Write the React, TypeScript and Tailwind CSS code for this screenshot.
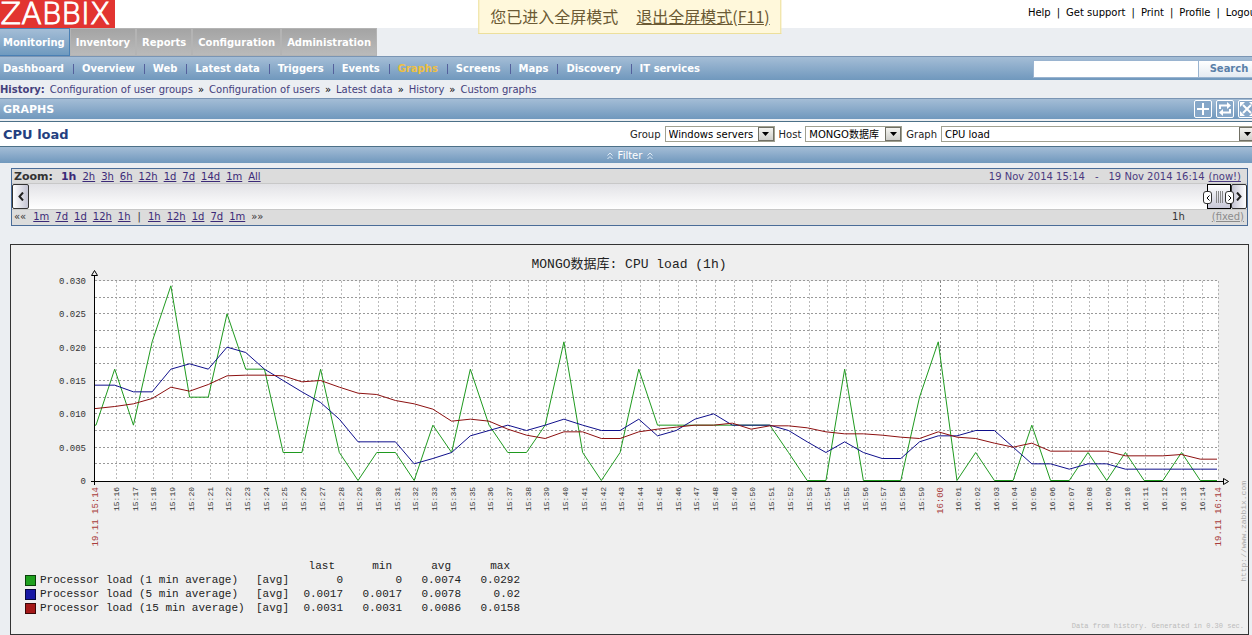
import { useState } from 'react';
import type { ReactNode } from 'react';

const MAIN_MENU = ['Monitoring', 'Inventory', 'Reports', 'Configuration', 'Administration'];
const SUB_MENU = [
  'Dashboard', 'Overview', 'Web', 'Latest data', 'Triggers', 'Events',
  'Graphs', 'Screens', 'Maps', 'Discovery', 'IT services'
];
const TOP_LINKS = ['Help', 'Get support', 'Print', 'Profile', 'Logout'];
const HISTORY = [
  'Configuration of user groups', 'Configuration of users', 'Latest data', 'History', 'Custom graphs'
];
const ZOOM_LEVELS = ['2h', '3h', '6h', '12h', '1d', '7d', '14d', '1m', 'All'];
const BACK_STEPS = ['1m', '7d', '1d', '12h', '1h'];
const FORWARD_STEPS = ['1h', '12h', '1d', '7d', '1m'];

// one value per minute from 15:15 on, in 1/10000 of load
const SERIES = [
  {
    name: 'Processor load (1 min average)',
    color: '#1f9a1f',
    swatch: 'bg-[#1fa01f] border-[#0a400a]',
    stats: ['0', '0', '0.0074', '0.0292'],
    data: [
      83, 167, 83, 208, 292, 125, 125, 250, 167, 167, 42, 42, 167, 42, 0, 42, 42, 0, 83, 42,
      167, 83, 42, 42, 83, 208, 42, 0, 42, 167, 83, 83, 83, 83, 83, 83, 83, 42, 0, 0,
      167, 0, 0, 0, 125, 208, 0, 42, 0, 0, 83, 0, 0, 42, 0, 42, 0, 0, 42, 0
    ]
  },
  {
    name: 'Processor load (5 min average)',
    color: '#10108c',
    swatch: 'bg-[#1818a4] border-[#08083c]',
    stats: ['0.0017', '0.0017', '0.0078', '0.02'],
    data: [
      143, 143, 133, 133, 167, 175, 167, 200, 192, 167, 150, 133, 117, 92, 58, 58, 58, 25, 33, 42,
      67, 75, 83, 75, 83, 92, 83, 75, 75, 92, 67, 75, 92, 100, 83, 83, 83, 75, 58, 42,
      58, 42, 33, 33, 58, 67, 67, 75, 75, 50, 25, 25, 17, 25, 25, 17, 17, 17, 17, 17
    ]
  },
  {
    name: 'Processor load (15 min average)',
    color: '#8c1010',
    swatch: 'bg-[#a41818] border-[#3c0808]',
    stats: ['0.0031', '0.0031', '0.0086', '0.0158'],
    data: [
      108, 111, 115, 123, 140, 134, 144, 157, 158, 158, 157, 148, 150, 140, 131, 129, 120, 115, 107, 89,
      92, 89, 77, 68, 63, 73, 73, 63, 63, 73, 77, 80, 83, 83, 86, 77, 82, 82, 79, 73,
      70, 70, 68, 65, 63, 73, 65, 63, 56, 50, 56, 44, 44, 44, 44, 37, 37, 37, 39, 32
    ]
  }
];

const PLOT = { left: 84, right: 1207, top: 36, bottom: 236 };
const MINUTE = (PLOT.right - PLOT.left) / 60;

const gridX = (i: number) => Math.round(105 + i * MINUTE) + 0.5;
const gridY = (i: number) => Math.round(PLOT.bottom - (i * (PLOT.bottom - PLOT.top)) / 12) - 0.5;

function toPoints(data: number[]) {
  const y = (v: number) => PLOT.bottom - 0.5 - (v / 300) * (PLOT.bottom - PLOT.top);
  const points = data.map((v, i) => `${PLOT.left + 1 + i * MINUTE},${y(v)}`);
  return [`${PLOT.left},${y(data[0])}`, ...points, `${PLOT.right - 1},${y(data[data.length - 1])}`].join(' ');
}

function timeLabel(i: number) {
  const minutes = 16 + i;
  return `${15 + Math.floor(minutes / 60)}:${String(minutes % 60).padStart(2, '0')}`;
}

function VerticalLabel({ x, y = 242, children, className }: { x: number; y?: number; children: ReactNode; className: string }) {
  return (
    <text transform={`translate(${x} ${y}) rotate(-90)`} textAnchor="end" className={className}>
      {children}
    </text>
  );
}

function Chart() {
  const minutes = Array.from({ length: 59 }, (_, i) => i);
  const steps = Array.from({ length: 12 }, (_, i) => i + 1);

  return (
    <svg viewBox="0 0 1237 305" className="block w-full overflow-visible font-['Liberation_Mono','Noto_Sans_CJK_SC',monospace]">
      <text x="618" y="23" textAnchor="middle" className="fill-[#222] text-[13px]">MONGO数据库: CPU load (1h)</text>

      <rect x={PLOT.left} y={PLOT.top} width={PLOT.right - PLOT.left} height={PLOT.bottom - PLOT.top} fill="#fff" />

      {/* Grid */}
      <g strokeDasharray="2 2" strokeWidth="1" fill="none">
        {minutes.map(i => (
          <line key={i} x1={gridX(i)} x2={gridX(i)} y1={PLOT.top} y2={PLOT.bottom} stroke={i === 44 ? '#888' : '#bbb'} />
        ))}
        {steps.map(i => (
          <line key={i} x1={PLOT.left} x2={PLOT.right} y1={gridY(i)} y2={gridY(i)} stroke="#999" />
        ))}
        <line x1={PLOT.right + 0.5} x2={PLOT.right + 0.5} y1={PLOT.top} y2={PLOT.bottom} stroke="#b4b4b4" />
      </g>

      {SERIES.map(s => (
        <polyline key={s.name} points={toPoints(s.data)} fill="none" stroke={s.color} strokeWidth="1" />
      ))}

      {/* Axes */}
      <g stroke="#000" fill="none">
        <path d="M83.5 30V240M80 236.5H1213" />
        <path d="M80.5 30.5L83.5 25.5L86.5 30.5Z" fill="#efefef" />
        <path d="M1212.5 233.5L1217.5 236.5L1212.5 239.5Z" fill="#efefef" />
      </g>

      {[0, 1, 2, 3, 4, 5, 6].map(i => (
        <text key={i} x="75" y={gridY(i * 2) + 3} textAnchor="end" className="fill-[#333] text-[9px]">
          {i === 0 ? '0' : (i * 0.005).toFixed(3)}
        </text>
      ))}

      <VerticalLabel x={87} className="fill-[#a83c3c] text-[9px]">19.11 15:14</VerticalLabel>
      {minutes.map(i => (
        <VerticalLabel key={i} x={gridX(i) + 2} className={i === 44 ? 'fill-[#a83c3c] text-[9px]' : 'fill-[#333] text-[8px]'}>
          {timeLabel(i)}
        </VerticalLabel>
      ))}
      <VerticalLabel x={1210} className="fill-[#a83c3c] text-[9px]">19.11 16:14</VerticalLabel>
      <VerticalLabel x={1235} y={236} className="fill-[#aaa] text-[8px]">http://www.zabbix.com</VerticalLabel>
    </svg>
  );
}

function Legend() {
  return (
    <table className="ml-3.5 mt-[9px] border-collapse font-['Liberation_Mono',monospace] text-[11px] leading-[14px] text-[#222]">
      <thead>
        <tr>
          <td className="w-[231px]" />
          <td />
          {['last', 'min', 'avg', 'max'].map((h, i) => (
            <th key={h} scope="col" className={i === 0 ? 'w-[54px] pr-2 text-right font-normal' : 'w-[59px] pr-2.5 text-right font-normal'}>
              {h}
            </th>
          ))}
        </tr>
      </thead>
      <tbody>
        {SERIES.map(s => (
          <tr key={s.name}>
            <th scope="row" className="text-left font-normal">
              <span className="flex items-center gap-1">
                <span className={`size-[11px] border ${s.swatch}`} />
                {s.name}
              </span>
            </th>
            <td>[avg]</td>
            {s.stats.map((v, i) => <td key={i} className="text-right">{v}</td>)}
          </tr>
        ))}
      </tbody>
    </table>
  );
}

function Dropdown({ id, label, options, className }: { id: string; label: string; options: string[]; className: string }) {
  return (
    <>
      <label htmlFor={id} className="mr-1 pt-px">{label}</label>
      <div className={`relative mr-1 h-4 border border-[#a0a090] bg-white ${className}`}>
        <select id={id} className="block h-full w-full appearance-none pt-px pl-[3px] pr-4 text-[10px] text-black outline-none">
          {options.map(o => <option key={o}>{o}</option>)}
        </select>
        <span className="pointer-events-none absolute inset-y-0 right-0 flex w-4 items-center justify-center border border-[#706f64] bg-linear-to-b from-[#f4f4f0] to-[#cfcfcb]">
          <svg viewBox="0 0 7 4" className="h-1 w-[7px]"><path d="M0 0H7L3.5 4Z" fill="#000" /></svg>
        </span>
      </div>
    </>
  );
}

function IconButton({ label, children }: { label: string; children: ReactNode }) {
  return (
    <button type="button" aria-label={label} className="size-[18px] rounded-[2px] border border-white bg-[#86a7c8]">
      <svg viewBox="0 0 16 16" className="size-4" fill="none" stroke="#fff" strokeWidth="2">{children}</svg>
    </button>
  );
}

function FilterArrow() {
  return (
    <svg viewBox="0 0 6 8" className="h-2 w-1.5" fill="none" stroke="#dfeaf4">
      <path d="M0.5 3.5L3 1L5.5 3.5M0.5 7L3 4.5L5.5 7" />
    </svg>
  );
}

function Grip({ direction, className }: { direction: 'left' | 'right'; className: string }) {
  return (
    <span className={`absolute top-[6px] flex h-[13px] w-[9px] items-center justify-center rounded-[3px] border border-[#333] bg-white ${className}`}>
      <svg viewBox="0 0 4 6" className="h-1.5 w-1" fill="none" stroke="#000">
        <path d={direction === 'left' ? 'M3.5 0.5L1 3L3.5 5.5' : 'M0.5 0.5L3 3L0.5 5.5'} />
      </svg>
    </span>
  );
}

function StepLinks({ items }: { items: string[] }) {
  return (
    <>
      {items.map(item => <a key={item} href="#" className="text-[#3b2a78] underline">{item}</a>)}
    </>
  );
}

function Timeline() {
  return (
    <div className="ml-[11px] mr-3 mt-[5px] border border-[#4a6c98] bg-[#dcdcdc] text-[#333]">
      <div className="flex h-3.5 items-center justify-between pt-0.5 pl-0.5 pr-[6px]">
        <div className="flex items-center gap-1.5">
          <span className="text-[11px] font-bold">Zoom:</span>
          <a href="#" className="pl-0.5 text-[11px] font-bold text-[#3b2a78]">1h</a>
          <StepLinks items={ZOOM_LEVELS} />
        </div>
        <div className="flex items-center text-[#4a3a80]">
          <a href="#">19 Nov 2014 15:14</a>
          <span className="px-2.5">-</span>
          <a href="#">19 Nov 2014 16:14</a>
          <a href="#" className="ml-1 underline">(now!)</a>
        </div>
      </div>

      <div className="flex h-[27px] items-stretch border-y border-[#c8c8c8] bg-linear-to-b from-[#e2e2e6] to-white">
        <button type="button" aria-label="Back" className="flex w-[17px] items-center justify-center rounded-[2px] border border-[#333] bg-linear-to-r from-white to-[#c4c4d4]">
          <svg viewBox="0 0 6 9" className="h-[9px] w-1.5" fill="none" stroke="#222" strokeWidth="2"><path d="M5 0.5L1.5 4.5L5 8.5" /></svg>
        </button>
        <div className="flex-1" />
        <div className="relative flex w-6 items-center justify-center gap-px border border-black bg-linear-to-b from-white to-[#c8c8d8]">
          <Grip direction="left" className="-left-[5px]" />
          {[0, 1, 2, 3].map(i => <span key={i} className="h-3 w-px bg-[#888]" />)}
          <Grip direction="right" className="-right-1" />
        </div>
        <button type="button" aria-label="Forward" className="flex w-4 items-center justify-center rounded-[2px] border border-[#333] bg-linear-to-r from-[#c4c4d4] to-white">
          <svg viewBox="0 0 6 9" className="h-[9px] w-1.5" fill="none" stroke="#222" strokeWidth="2"><path d="M1 0.5L4.5 4.5L1 8.5" /></svg>
        </button>
      </div>

      <div className="flex h-[15px] items-center justify-between pb-0.5 pl-0.5 pr-[3px]">
        <div className="flex items-center gap-1.5">
          <span className="pr-px">««</span>
          <StepLinks items={BACK_STEPS} />
          <span className="px-px">|</span>
          <StepLinks items={FORWARD_STEPS} />
          <span>»»</span>
        </div>
        <div className="flex items-center gap-[27px]">
          <span>1h</span>
          <a href="#" className="text-[#8c8c8c] underline">(fixed)</a>
        </div>
      </div>
    </div>
  );
}

export default function App() {
  const [search, setSearch] = useState('');

  return (
    <div className="relative min-h-screen overflow-hidden bg-[#ebeef2] font-['DejaVu_Sans','Noto_Sans_CJK_SC',sans-serif] text-[10px] leading-3 whitespace-nowrap">
      {/* the page is a little wider than its window */}
      <div className="relative -mr-2 pb-0.5">
        <div className="absolute left-1/2 top-0 z-10 flex h-[34px] -translate-x-1/2 items-center gap-[18px] border border-t-0 border-[#ecdf9c] bg-[#fff8db] px-[11px] pb-0.5 font-['Noto_Sans_CJK_SC',sans-serif] text-base text-[#6b5a34]">
          <span>您已进入全屏模式</span>
          <a href="#" className="underline">退出全屏模式(F11)</a>
        </div>

        <header className="flex h-7 items-center justify-between bg-white">
          <a href="#" className="flex h-7 w-[115px] items-center justify-center bg-[#e23430] pr-1 text-[30px] leading-7 font-extralight text-white [-webkit-text-stroke:1px_#fff]">ZABBIX</a>
          <nav className="flex items-center pb-0.5 text-black">
            {TOP_LINKS.map((link, i) => (
              <span key={link} className="flex items-center">
                {i > 0 && <span className="px-1.5">|</span>}
                <a href="#">{link}</a>
              </span>
            ))}
          </nav>
        </header>

        <nav className="flex h-7 font-bold text-white">
          {MAIN_MENU.map(item => (
            <a
              key={item}
              href="#"
              className={item === 'Monitoring'
                ? 'flex items-center border border-l-0 border-[#4a80b4] bg-linear-to-b from-[#a4bdd6] to-[#6f9abf] pt-0.5 pl-[3px] pr-1'
                : 'flex items-center border border-[#b4b4b4] bg-linear-to-b from-[#a4a4a4] to-[#bababa] px-[5px] pt-0.5'}
            >
              {item}
            </a>
          ))}
        </nav>

        <div className="flex h-6 items-center justify-between border-t border-[#7a95b4] bg-linear-to-b from-[#a4bdd6] to-[#7098bd] pl-[3px] pr-px">
          <nav className="flex items-center font-bold text-white">
            {SUB_MENU.map((item, i) => (
              <span key={item} className="flex items-center">
                {i > 0 && <span className="ml-[9px] mr-2 h-2.5 w-px bg-[#54609c]" />}
                <a href="#" className={item === 'Graphs' ? 'text-[#f0c040]' : ''}>{item}</a>
              </span>
            ))}
          </nav>
          <form className="flex h-[18px]" onSubmit={e => e.preventDefault()}>
            <input
              type="text"
              aria-label="Search"
              value={search}
              onChange={e => setSearch(e.target.value)}
              className="w-[166px] border border-[#9ab4d0] bg-white px-1 outline-none"
            />
            <button type="submit" className="w-[60px] border-y border-[#9ab4d0] bg-linear-to-b from-white to-[#e4ebf2] font-bold text-[#5a80a8]">
              Search
            </button>
          </form>
        </div>

        <div className="flex h-[18px] items-center pt-0.5 text-[#45407c]">
          <span className="mr-[5px] font-bold">History:</span>
          {HISTORY.map((item, i) => (
            <span key={item}>
              {i > 0 && <span className="px-[5px] text-black">»</span>}
              <a href="#">{item}</a>
            </span>
          ))}
        </div>

        <div className="flex h-[21px] items-center justify-between border-t border-[#7a95b4] bg-linear-to-b from-[#a4bdd6] to-[#7098bd] pl-[3px] pr-1">
          <h1 className="pt-px text-[11px] font-bold text-white">GRAPHS</h1>
          <div className="flex gap-1">
            <IconButton label="Add to favourites"><path d="M8 2V14M2 8H14" /></IconButton>
            <IconButton label="Reset">
              <path d="M3 8V4.5H11M13 8V11.5H5" />
              <path d="M10 1L14 4.5L10 8ZM6 8L2 11.5L6 15Z" fill="#fff" stroke="none" />
            </IconButton>
            <IconButton label="Fullscreen">
              <path d="M4 4L12 12M12 4L4 12" />
              <path d="M1 1H6L1 6ZM15 1V6L10 1ZM1 15V10L6 15ZM15 15H10L15 10Z" fill="#fff" stroke="none" />
            </IconButton>
          </div>
        </div>

        <div className="mt-0.5 flex h-[26px] items-center justify-between border-y border-[#4c7088] bg-white pl-[3px]">
          <h2 className="pt-0.5 text-[13px] font-bold text-[#243f80]">CPU load</h2>
          <form className="flex items-center text-[#222]">
            <Dropdown id="group" label="Group" options={['Windows servers']} className="w-[110px]" />
            <Dropdown id="host" label="Host" options={['MONGO数据库']} className="w-[97px]" />
            <Dropdown id="graph" label="Graph" options={['CPU load']} className="w-[315px]" />
          </form>
        </div>

        <button type="button" className="flex h-4 w-full items-center justify-center gap-[5px] bg-linear-to-b from-[#a4bdd6] to-[#7098bd] pt-0.5 text-white">
          <FilterArrow />
          Filter
          <FilterArrow />
        </button>

        <Timeline />

        <main className="ml-2.5 mr-[11px] mt-[18px] border border-[#333] bg-[#efefef]">
          <Chart />
          <Legend />
          <p className="mt-[5px] pr-1 pb-0.5 text-right font-['Liberation_Mono',monospace] text-[7px] text-[#bbb]">
            Data from history. Generated in 0.30 sec.
          </p>
        </main>
      </div>
    </div>
  );
}
